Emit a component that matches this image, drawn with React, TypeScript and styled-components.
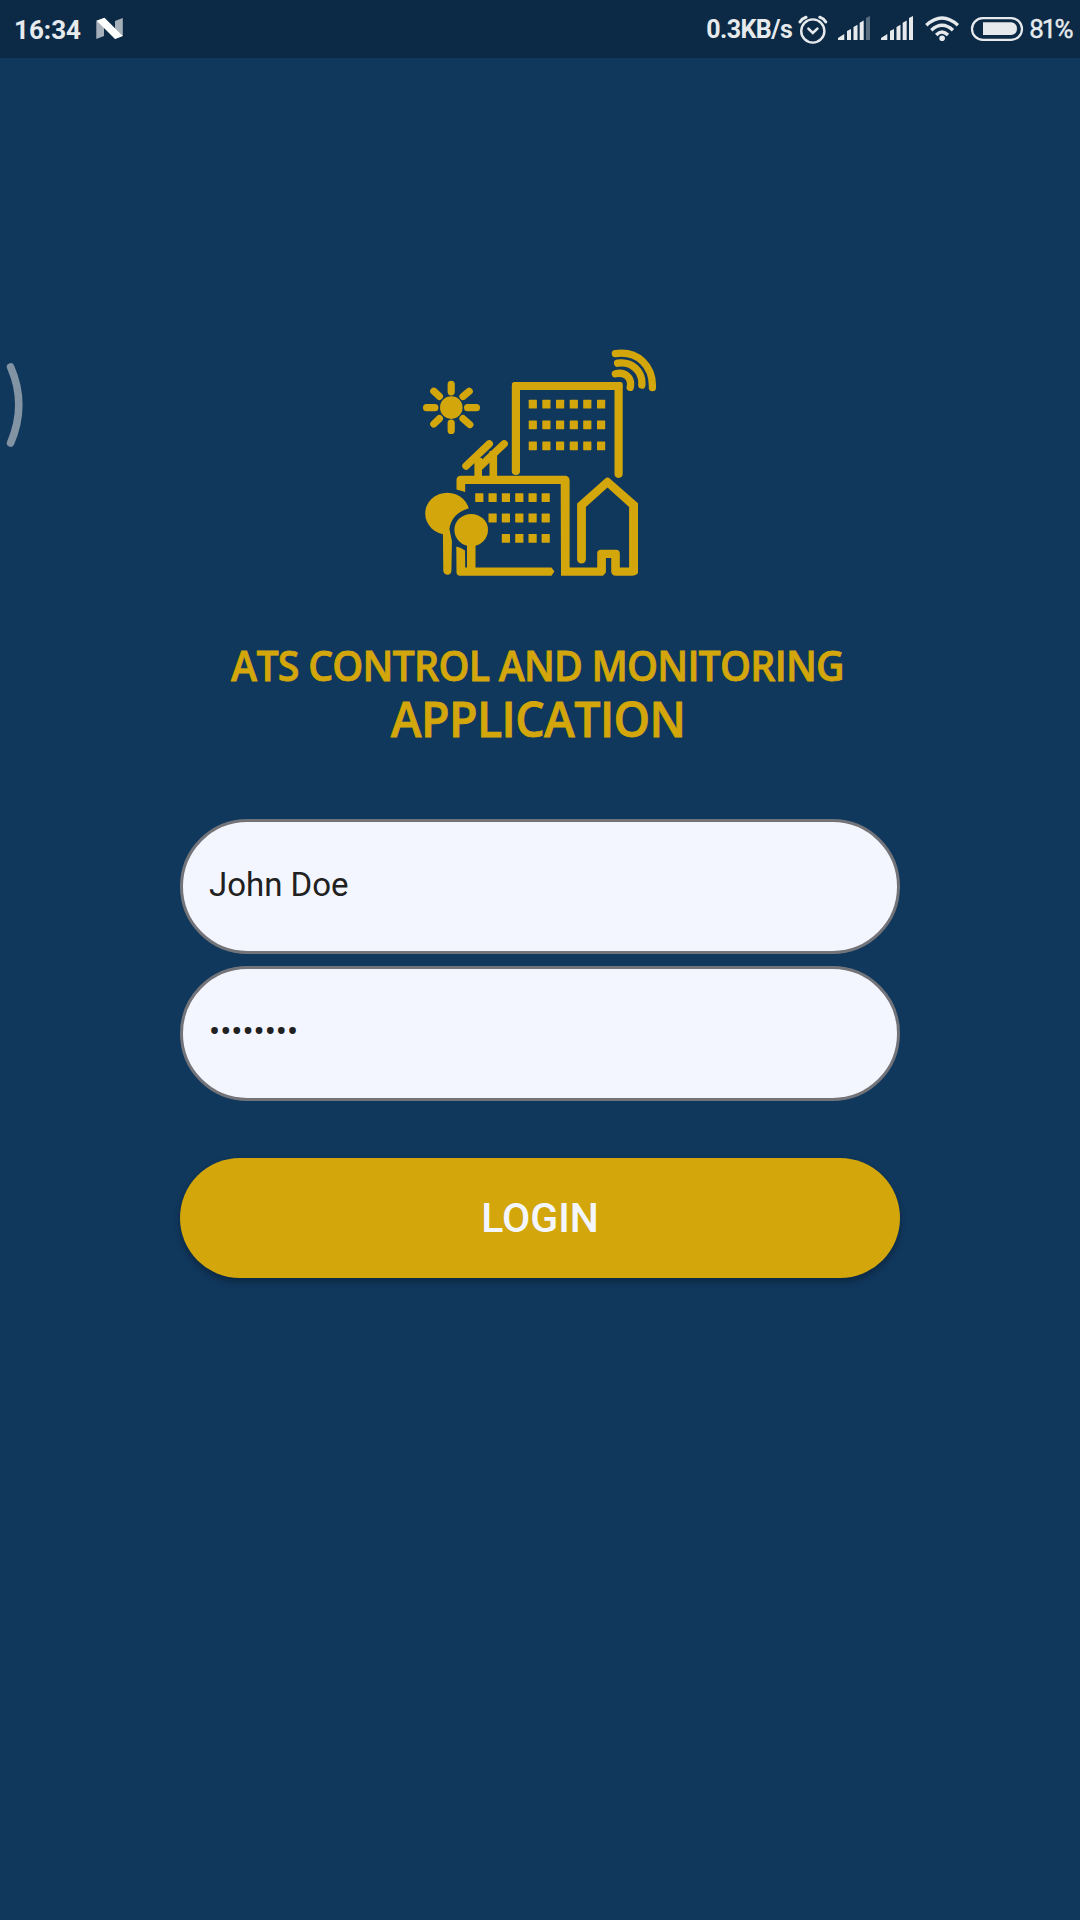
import React from 'react';
import styled, { createGlobalStyle } from 'styled-components';

const NAVY = '#10375c';
const GOLD = '#d3a70b';
const PALE = '#e7eaed';

const GlobalStyle = createGlobalStyle`
  * { box-sizing: border-box; }
  body { margin: 0; background: ${NAVY}; }
`;

const Screen = styled.div`
  position: relative;
  display: flex;
  flex-direction: column;
  width: 1080px;
  height: 1920px;
  overflow: hidden;
  background: ${NAVY};
  font-family: Roboto, sans-serif;
`;

const StatusBar = styled.header`
  display: flex;
  align-items: center;
  justify-content: space-between;
  height: 58px;
  padding: 0 8.5px 0 14px;
  background: #0c2a45;
  color: ${PALE};
`;

const StatusGroup = styled.div`
  display: flex;
  align-items: center;
  height: 58px;
`;

const StatusText = styled.span<{ $weight: number; $size: number; $spacing?: number }>`
  font-size: ${(p) => p.$size}px;
  font-weight: ${(p) => p.$weight};
  letter-spacing: ${(p) => p.$spacing ?? 0}px;
  line-height: 58px;
  padding-top: 2px;
  white-space: nowrap;
`;

const BatteryText = styled(StatusText)`
  padding-top: 0;
  -webkit-text-stroke: 0.4px ${PALE};
`;

const StatusIcon = styled.svg<{ $gap: number }>`
  display: block;
  flex: none;
  height: 58px;
  margin-left: ${(p) => p.$gap}px;
`;

const EdgeHandle = styled.svg`
  position: absolute;
  left: 0;
  top: 350px;
`;

const Content = styled.main`
  display: flex;
  flex-direction: column;
  align-items: center;
  padding-top: 290px;
`;

const Logo = styled.svg`
  display: block;
  width: 240px;
  height: 232px;
`;

const Title = styled.h1`
  display: flex;
  flex-direction: column;
  align-items: center;
  margin: 58px 5px 0 0;
  color: ${GOLD};
  font-family: 'Open Sans', 'Noto Sans', sans-serif;
  font-weight: 600;
  white-space: nowrap;
  -webkit-text-stroke: 0.8px ${GOLD};
`;

const TitleLine = styled.span<{ $size: number; $height: number; $spacing: number }>`
  font-size: ${(p) => p.$size}px;
  line-height: ${(p) => p.$height}px;
  letter-spacing: ${(p) => p.$spacing}px;
  margin-right: ${(p) => p.$spacing}px;
  transform: scaleX(0.95);
`;

const Form = styled.div`
  display: flex;
  flex-direction: column;
  gap: 12px;
  width: 720px;
  margin-top: 75px;
`;

const Field = styled.div`
  display: flex;
  align-items: center;
  height: 135px;
  padding: 0 26px 5px;
  border: 3px solid #737479;
  border-radius: 68px;
  background: #f4f6ff;
  color: #212121;
  font-size: 33px;
`;

const LoginButton = styled.button`
  height: 120px;
  margin-top: 45px;
  padding: 0;
  border: 0;
  border-radius: 60px;
  background: ${GOLD};
  box-shadow: 0 4px 6px rgba(0, 0, 0, 0.28);
  color: #f4f6ff;
  font-family: Roboto, sans-serif;
  font-size: 41px;
  font-weight: 500;
`;

const Signal = ({ gap, weak }: { gap: number; weak?: boolean }) => (
  <StatusIcon $gap={gap} width="33" viewBox="0 0 33 58" fill={PALE}>
    <path d="M0 40V38L6.3 34V40ZM9 40V31L13 29V40ZM15.5 40V27L19.5 24.7V40ZM21.7 40V22.7L25.7 20.6V40Z" />
    <path d="M28 40V18L32 16V40Z" opacity={weak ? 0.35 : 1} />
  </StatusIcon>
);

const WINDOW_ROWS = [
  { xs: [528.7, 542.3, 556, 569.7, 583.2, 597], ys: [399.7, 420.4, 441.4], s: 8.2 },
  { xs: [475.2, 488.5, 501.8, 515.2, 528.5, 541.6], ys: [493.2], s: 8.2 },
  { xs: [488.5, 501.8, 515.2, 528.5, 541.6], ys: [513.6], s: 8.2 },
  { xs: [501.8, 515.2, 528.5, 541.6], ys: [534], s: 8.2 },
];

const CityLogo = () => (
  <Logo viewBox="420 348 240 232" fill="none" stroke={GOLD} strokeLinecap="round" strokeLinejoin="round">
    <circle cx="451.3" cy="407.6" r="11.3" fill={GOLD} stroke="none" />
    <path
      strokeWidth="7.2"
      d="M451.2 384.4V391.8M451.2 423V430.4M426.6 407.7H434.8M467.6 407.7H476.4M433.8 391.2L439.4 396.4M469.2 391.2L463 396.4M433.8 424L439.4 418.6M463 418.6L469.8 424.6"
    />
    <path strokeWidth="7.3" d="M615.4 353.6C638 350.5 653.2 366 652.4 387.7M617.6 363.2C632 361 643 371.5 641.8 385.1M615.3 373.8C625.5 371.3 632.3 378 630.2 387.4" />
    <path strokeWidth="8.2" d="M515.9 471V386H618.6V473.8" />
    <path fill={GOLD} stroke="none" d="M512 387V383.5L513.5 382H621L622.5 383V387Z" />
    <path strokeWidth="7.4" d="M466 466L489.3 443.8M504.2 443.8L479 467.5" />
    <path strokeWidth="7.6" strokeLinecap="butt" d="M478.2 458V478M493.3 451V478" />
    <path fill={GOLD} stroke="none" d="M456.5 489.5V480Q456.7 475.8 461 475.8H566Q569.6 477 569.6 480.5V567.4H597.2V553.5Q597.2 549.8 601 549.8H616Q619.8 549.8 619.8 553.5V567.4H629.1V507.1L607.5 487.4L585.9 507.1V559.5Q585.2 563.6 581.6 563.6Q577.6 563.6 577.1 559.5V503.5L605 478.8Q607.5 476.3 610 478.8L638 503.2V573Q636 575.8 632 575.8H616Q611.2 575.8 611.2 571V558.1H605.9V572.5L603 575.8H561L560.7 484H465.2V492Z" />
    <ellipse cx="447.3" cy="513.6" rx="22.1" ry="20.9" fill={GOLD} stroke="none" />
    <path fill={NAVY} stroke="none" d="M468.7 508.6C460 510.5 449.6 518 449.3 531C449.3 537 451 542 451.8 550H465.2L474 530V508Z" />
    <path fill={GOLD} stroke="none" d="M442.9 530L443.3 571Q444 574.7 447.5 574.7Q451 574.5 451.4 571L451.9 541L449.6 530Z" />
    <path fill={GOLD} stroke="none" d="M456.3 546.4Q461 547.2 465 550.4L465.2 567.5H467V530H475.5V567.5H551.5L554.4 571.6L551.5 575.8H460Q456.5 575.8 456.5 572Z" />
    <ellipse cx="471.2" cy="530" rx="16.8" ry="16.1" fill={GOLD} stroke="none" />
    <g fill={GOLD} stroke="none">
      {WINDOW_ROWS.flatMap((row) =>
        row.ys.flatMap((y) => row.xs.map((x) => <rect key={`${x}-${y}`} x={x} y={y} width={row.s} height="8.8" rx="0.6" />)),
      )}
    </g>
  </Logo>
);

export default function App() {
  return (
    <Screen>
      <GlobalStyle />
      <StatusBar>
        <StatusGroup>
          <StatusText $weight={700} $size={26}>16:34</StatusText>
          <StatusIcon $gap={15} width="28" viewBox="96 0 28 58">
            <path fill="#a5afba" d="M96.3 20.7L104 18V36L96.3 39ZM115 21L122.8 18V36L115 39Z" />
            <path fill="#fff" d="M96.7 20.7L104.5 17.8L122.7 36L115 39Z" />
          </StatusIcon>
        </StatusGroup>
        <StatusGroup>
          <StatusText $weight={700} $size={25} $spacing={-0.55}>0.3KB/s</StatusText>
          <StatusIcon $gap={6} width="30" viewBox="798 0 30 58" fill="none" stroke={PALE} strokeWidth="2.4" strokeLinecap="round">
            <circle cx="812.8" cy="31" r="11.6" />
            <path strokeWidth="2.6" d="M808.4 28.6L812.8 33L817.4 28.6" />
            <path strokeWidth="3" d="M800 22Q802 18.5 806 17.2M819.8 17.2Q823.6 18.5 825.8 22" />
          </StatusIcon>
          <Signal gap={10} weak />
          <Signal gap={10} />
          <StatusIcon $gap={10} width="36" viewBox="924 0 36 58" fill="none" stroke={PALE} strokeWidth="3.4">
            <path d="M926.3 25.2Q942 10.7 957.9 25.2M931.3 30.3Q942 20.3 953 30.3M936.2 35Q942 29 948 35" />
            <circle cx="942.1" cy="38.2" r="2.8" fill={PALE} stroke="none" />
          </StatusIcon>
          <StatusIcon $gap={10} width="54" viewBox="970 0 54 58">
            <rect x="972" y="18.2" width="50" height="21.6" rx="10.8" fill="none" stroke={PALE} strokeWidth="2.2" />
            <path fill={PALE} d="M983 22.3H1011.5Q1017 23.5 1017 28.7Q1017 34 1011.5 35H983Z" />
          </StatusIcon>
          <StatusIcon $gap={0} width="5" viewBox="0 0 5 58" />
          <BatteryText $weight={400} $size={26} $spacing={-2}>81%</BatteryText>
        </StatusGroup>
      </StatusBar>
      <EdgeHandle width="30" height="110" viewBox="0 350 30 110" fill="none">
        <path d="M10.6 367Q27 404.5 10.6 443" stroke="#8293a3" strokeWidth="7.6" strokeLinecap="round" />
      </EdgeHandle>
      <Content>
        <CityLogo />
        <Title>
          <TitleLine $size={41.5} $height={54} $spacing={-0.85}>ATS CONTROL AND MONITORING</TitleLine>
          <TitleLine $size={49} $height={52} $spacing={-0.65}>APPLICATION</TitleLine>
        </Title>
        <Form>
          <Field>John Doe</Field>
          <Field>••••••••</Field>
          <LoginButton>LOGIN</LoginButton>
        </Form>
      </Content>
    </Screen>
  );
}
